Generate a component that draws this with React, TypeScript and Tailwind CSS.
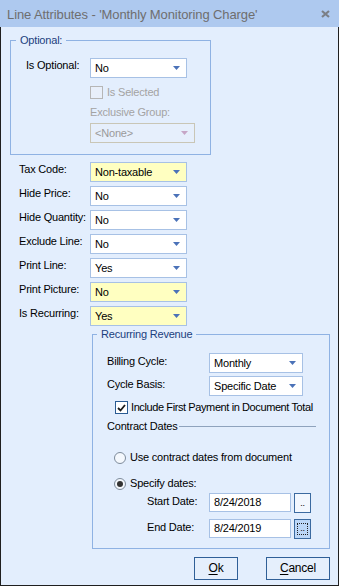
import clsx from "clsx"

const font = "font-['Liberation_Sans',Arial,sans-serif]"

function Arrow({ color = "#4b72b8" }: { color?: string }) {
  return (
    <svg width="7" height="4" viewBox="0 0 7 4" className="shrink-0">
      <path d="M0 0h7L3.5 4z" fill={color} />
    </svg>
  )
}

function Select({
  value,
  width,
  yellow,
  disabled,
}: {
  value: string
  width: string
  yellow?: boolean
  disabled?: boolean
}) {
  return (
    <div
      className={clsx(
        "flex h-[20px] items-center justify-between border pl-[4px] pr-[6px]",
        width,
        disabled
          ? "border-[#c9c6b6] bg-[#e6effc] text-[#9a9a9a]"
          : yellow
            ? "border-[#a7c1e5] bg-[#ffffc1] text-black"
            : "border-[#a7c1e5] bg-white text-black",
      )}
    >
      <span>{value}</span>
      <Arrow color={disabled ? "#c6a6c6" : "#4b72b8"} />
    </div>
  )
}

function Row({ label, value, yellow }: { label: string; value: string; yellow?: boolean }) {
  return (
    <div className="flex items-start">
      <span className="w-[71px] pt-[1px]">{label}</span>
      <Select value={value} width="w-[97px]" yellow={yellow} />
    </div>
  )
}

function Radio({ checked, label }: { checked?: boolean; label: string }) {
  return (
    <div className="flex items-center gap-[4px]">
      <div className="flex h-[12px] w-[12px] items-center justify-center rounded-full border border-[#7d8b9b] bg-[#f4f8fd]">
        {checked && <div className="h-[6px] w-[6px] rounded-full bg-[#333]" />}
      </div>
      <span>{label}</span>
    </div>
  )
}

function DateRow({ label, value, focused }: { label: string; value: string; focused?: boolean }) {
  return (
    <div className="flex items-start">
      <span className="w-[62px] pt-[2px]">{label}</span>
      <div className="flex h-[19px] w-[82px] items-center border border-[#a7c1e5] bg-white pl-[4px]">{value}</div>
      <div
        className={clsx(
          "ml-[3px] flex h-[20px] w-[17px] items-end justify-center border border-[#3b6aa0] pb-[3px]",
          focused ? "bg-[#bcd7f8]" : "bg-[#f2f7fe]",
        )}
      >
        <div
          className={clsx(
            "flex h-[12px] w-[11px] items-end justify-center pb-[1px] text-[9px] leading-none",
            focused && "border border-dotted border-[#222]",
          )}
        >
          ..
        </div>
      </div>
    </div>
  )
}

export default function App() {
  return (
    <div className={clsx("flex h-[586px] w-[339px] flex-col text-[11px] leading-[13px] tracking-[-0.2px] text-black", font)}>
      {/* Title bar */}
      <div className="flex h-[27px] shrink-0 items-center justify-between bg-[#aec9ef] pl-[7px] pr-[9px] pt-[1px]">
        <span className="text-[13px] tracking-[-0.1px] text-[#6e6e6e]">Line Attributes - 'Monthly Monitoring Charge'</span>
        <svg width="9" height="8" viewBox="0 0 9 8">
          <path d="M1 1l7 6M8 1L1 7" stroke="#7b7f86" strokeWidth="2.2" />
        </svg>
      </div>

      {/* Body */}
      <div className="flex flex-1 flex-col border-x border-b border-[#1f1f1f] bg-[#e3eefd] pl-[9px] pt-[7px]">
        <fieldset className="w-[201px] border border-[#8fb2e3]">
          <legend className="ml-[5px] px-[4px] text-[#1b3f7e]">Optional:</legend>
          <div className="flex flex-col pb-[11px] pl-[15px] pt-[11px]">
            <div className="flex items-start">
              <span className="w-[64px] pt-[1px]">Is Optional:</span>
              <Select value="No" width="w-[97px]" />
            </div>
            <div className="ml-[64px] mt-[8px] flex items-center gap-[4px] text-[#a3a3a3]">
              <div className="h-[13px] w-[13px] border border-[#b6b6b6] bg-[#e8effa]" />
              <span>Is Selected</span>
            </div>
            <span className="ml-[64px] mt-[7px] text-[#a3a3a3]">Exclusive Group:</span>
            <div className="ml-[64px] mt-[4px]">
              <Select value="<None>" width="w-[105px]" disabled />
            </div>
          </div>
        </fieldset>

        <div className="mt-[7px] flex flex-col gap-[4px] pl-[9px]">
          <Row label="Tax Code:" value="Non-taxable" yellow />
          <Row label="Hide Price:" value="No" />
          <Row label="Hide Quantity:" value="No" />
          <Row label="Exclude Line:" value="No" />
          <Row label="Print Line:" value="Yes" />
          <Row label="Print Picture:" value="No" yellow />
          <Row label="Is Recurring:" value="Yes" yellow />
        </div>

        <fieldset className="ml-[82px] mt-[2px] w-[238px] border border-[#8fb2e3]">
          <legend className="ml-[4px] px-[4px] text-[#1b3f7e]">Recurring Revenue</legend>
          <div className="flex flex-col pb-[9px] pl-[14px] pr-[13px] pt-[12px]">
            <div className="flex items-start">
              <span className="w-[102px] pt-[2px]">Billing Cycle:</span>
              <Select value="Monthly" width="w-[94px]" />
            </div>
            <div className="mt-[3px] flex items-start">
              <span className="w-[102px] pt-[2px]">Cycle Basis:</span>
              <Select value="Specific Date" width="w-[94px]" />
            </div>
            <div className="ml-[8px] mt-[5px] flex items-center gap-[3px]">
              <div className="flex h-[13px] w-[13px] shrink-0 items-center justify-center border border-[#2a5b93] bg-white">
                <svg width="9" height="8" viewBox="0 0 9 8">
                  <path d="M1 4l2.5 2.5L8 1" fill="none" stroke="#1a1a1a" strokeWidth="1.8" />
                </svg>
              </div>
              <span className="whitespace-nowrap tracking-[-0.4px]">Include First Payment in Document Total</span>
            </div>
            <div className="mt-[6px] flex items-center gap-[1px]">
              <span>Contract Dates</span>
              <div className="h-px flex-1 bg-[#8fa3bd]" />
            </div>
            <div className="ml-[7px] mt-[18px] flex flex-col gap-[13px]">
              <Radio label="Use contract dates from document" />
              <Radio label="Specify dates:" checked />
            </div>
            <div className="ml-[40px] mt-[3px] flex flex-col gap-[6px]">
              <DateRow label="Start Date:" value="8/24/2018" />
              <DateRow label="End Date:" value="8/24/2019" focused />
            </div>
          </div>
        </fieldset>

        <div className="mt-[8px] flex gap-[28px] pl-[184px]">
          <button className="flex h-[23px] w-[44px] items-center justify-center border border-[#2f5f97] bg-[#e5effc] text-[12px]">
            <span className="underline decoration-1 underline-offset-2">O</span>k
          </button>
          <button className="flex h-[23px] w-[64px] items-center justify-center border border-[#2f5f97] bg-[#e5effc] text-[12px]">
            <span className="underline decoration-1 underline-offset-2">C</span>ancel
          </button>
        </div>
      </div>
    </div>
  )
}
